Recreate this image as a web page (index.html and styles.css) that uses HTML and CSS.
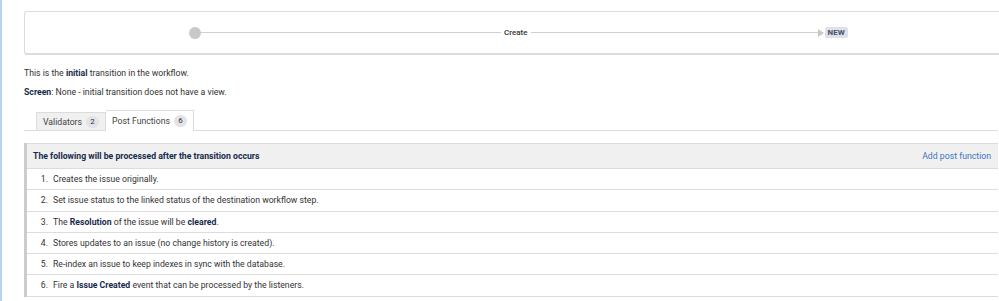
FILE: index.html
```html
<!DOCTYPE html>
<html lang="en">
<head>
    <meta charset="UTF-8">
    <meta name="viewport" content="width=device-width, initial-scale=1.0">
    <title>Transition: Create</title>
    <link rel="stylesheet" href="styles.css">
</head>
<body>

    <div class="page">
        <!-- diagram start -->
        <div class="diagram">
            <span class="step-dot"></span>
            <span class="step-line first"></span>
            <span class="step-name">Create</span>
            <span class="step-line second"></span>
            <span class="step-arrow"></span>
            <span class="lozenge">NEW</span>
        </div>
        <!-- diagram end -->

        <p class="info">This is the <b>initial</b> transition in the workflow.</p>
        <p class="info"><b>Screen</b>: None - initial transition does not have a view.</p>

        <div class="tabs">
            <div class="tab">Validators <span class="badge">2</span></div>
            <div class="tab active">Post Functions <span class="badge">6</span></div>
        </div>

        <div class="functions">
            <div class="functions-head">
                <span class="head-title">The following will be processed after the transition occurs</span>
                <a class="head-link" href="#">Add post function</a>
            </div>
            <ol class="functions-list">
                <li><span>Creates the issue originally.</span></li>
                <li><span>Set issue status to the linked status of the destination workflow step.</span></li>
                <li><span>The <b>Resolution</b> of the issue will be <b>cleared</b>.</span></li>
                <li><span>Stores updates to an issue (no change history is created).</span></li>
                <li><span>Re-index an issue to keep indexes in sync with the database.</span></li>
                <li><span>Fire a <b>Issue Created</b> event that can be processed by the listeners.</span></li>
            </ol>
        </div>
    </div>

</body>
</html>
```

FILE: styles.css
```css
body {
    margin: 0;
    padding: 0;
    height: 301px;
    overflow: hidden;
    font-family: Roboto, Arial, sans-serif;
    font-size: 8.7px;
    color: #172b4d;
    border-left: 2px solid #b6d4f3;
    background: #fff;
}

.page {
    padding: 11px 1px 0 22px;
}

/* diagram */
.diagram {
    height: 41px;
    margin-right: -6px;
    border: 1px solid #dcdcdc;
    border-bottom-width: 2px;
    border-radius: 3px;
    display: flex;
    align-items: center;
    padding-left: 164px;
}

.step-dot {
    width: 12px;
    height: 12px;
    border-radius: 50%;
    background: #c8c8c8;
}

.step-line {
    height: 1px;
    background: #cfcfcf;
}

.step-line.first {
    width: 300px;
}

.step-line.second {
    width: 287px;
}

.step-name {
    margin: 0 3px;
    font-weight: 500;
    font-size: 8px;
    color: #333;
}

.step-arrow {
    width: 0;
    height: 0;
    border-top: 4px solid transparent;
    border-bottom: 4px solid transparent;
    border-left: 6px solid #c8c8c8;
    margin-right: 1px;
}

.lozenge {
    background: #dfe1e6;
    color: #42526e;
    font-weight: 700;
    font-size: 8px;
    padding: 1px 3px;
    border-radius: 2px;
    line-height: 9px;
}

/* info text */
.info {
    margin: 13px 0 0 0;
    line-height: 10px;
    color: #333;
}

.info + .info {
    margin-top: 9px;
}

.info b {
    color: #172b4d;
}

/* tabs */
.tabs {
    display: flex;
    align-items: flex-end;
    margin-top: 13px;
    padding-left: 12px;
    border-bottom: 1px solid #dcdcdc;
}

.tab {
    display: flex;
    align-items: center;
    height: 17px;
    padding: 0 6px;
    background: #f0f0f0;
    border: 1px solid #dcdcdc;
    border-bottom: none;
    color: #444;
}

.tab + .tab {
    border-left: none;
}

.tab.active {
    height: 19px;
    background: #fff;
    margin-bottom: -1px;
    padding-bottom: 1px;
}

.badge {
    margin-left: 4px;
    min-width: 13px;
    height: 12px;
    line-height: 12px;
    border-radius: 6px;
    background: #e2e4e9;
    text-align: center;
    font-size: 8px;
    color: #333;
}

/* post functions */
.functions {
    margin-top: 12px;
    border-left: 3px solid #cccccc;
}

.functions-head {
    display: flex;
    justify-content: space-between;
    align-items: center;
    height: 24px;
    padding: 0 7px 0 6px;
    background: #f0f0f0;
    border-top: 1px solid #dcdcdc;
    border-bottom: 1px solid #dcdcdc;
}

.head-title {
    font-weight: 700;
    color: #172b4d;
}

.head-link {
    color: #3b73c4;
    text-decoration: none;
}

.functions-list {
    margin: 0;
    padding: 0;
    list-style: none;
    counter-reset: step;
    color: #333;
}

.functions-list li {
    display: flex;
    line-height: 20.3px;
    border-bottom: 1px solid #dddddd;
    counter-increment: step;
}

.functions-list li::before {
    content: counter(step) ".";
    width: 21px;
    margin-right: 5px;
    text-align: right;
}

.functions-list li b {
    color: #172b4d;
}
```
